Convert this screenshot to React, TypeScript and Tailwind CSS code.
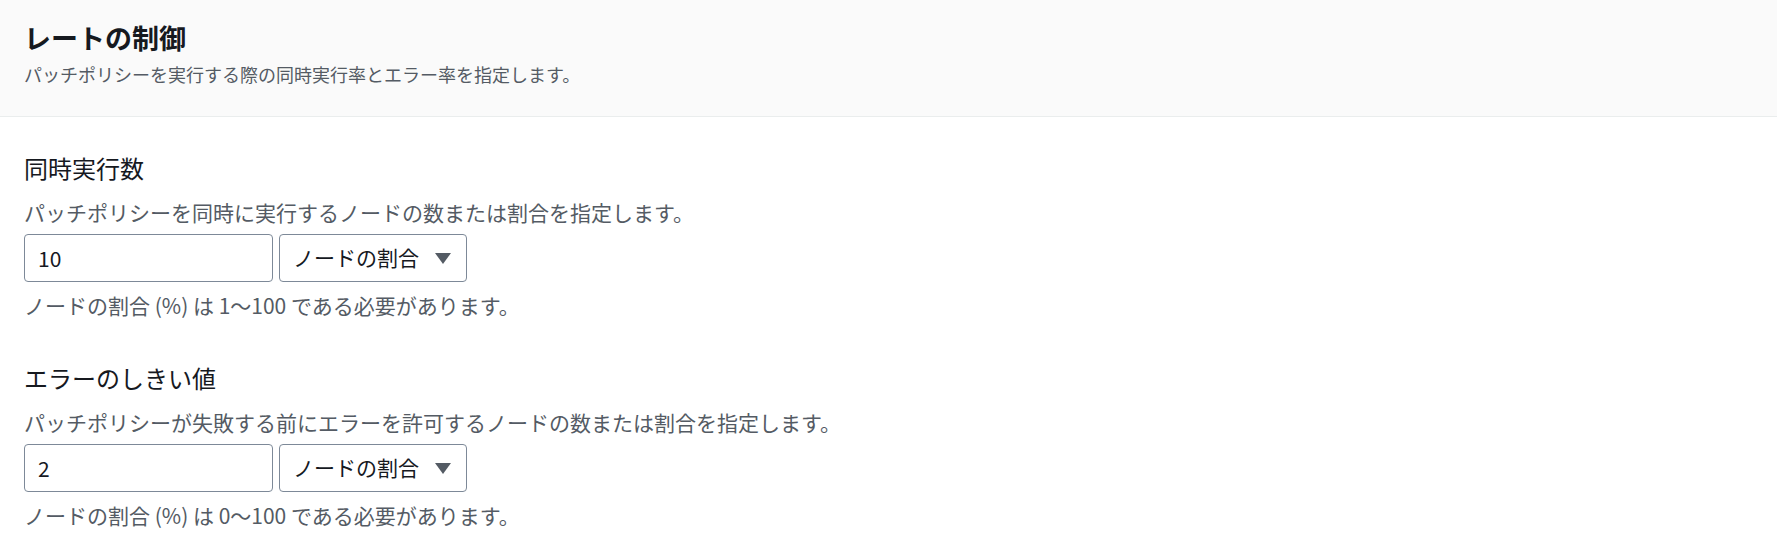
import React from 'react';

interface RateFieldProps {
  label: string;
  description: string;
  value: string;
  hint: string;
}

const RateField = ({ label, description, value, hint }: RateFieldProps) => {
  return (
    <section>
      <h2 className="text-[24px] leading-[32px] text-[#16191f]">{label}</h2>
      <p className="mt-[14px] text-[21px] leading-[28px] text-[#545b64]">{description}</p>
      <div className="mt-2 flex items-center gap-[6px]">
        <input
          type="text"
          defaultValue={value}
          className="h-[48px] w-[249px] rounded-[4px] border border-[#7d8998] bg-white px-[13px] text-[21px] text-[#16191f] focus:outline-none"
        />
        <button className="flex h-[48px] w-[188px] items-center justify-between rounded-[4px] border border-[#7d8998] bg-white pl-[13px] pr-[15px] text-[21px] text-[#16191f]">
          <span>ノードの割合</span>
          <svg width="16" height="11" viewBox="0 0 16 11" aria-hidden="true">
            <polygon points="0,0 16,0 8,11" fill="#545b64" />
          </svg>
        </button>
      </div>
      <p className="mt-[9px] text-[21px] leading-[28px] text-[#545b64]">{hint}</p>
    </section>
  );
};

const App = () => {
  return (
    <div className="min-h-[554px] w-full bg-white font-['Noto_Sans_CJK_JP','Noto_Sans',sans-serif]">
      <header className="h-[117px] border-b border-[#eaeded] bg-[#fafafa] px-6 pt-[21px]">
        <h1 className="text-[27px] font-bold leading-[34px] text-[#16191f]">レートの制御</h1>
        <p className="mt-[7px] text-[18px] leading-[24px] text-[#545b64]">
          パッチポリシーを実行する際の同時実行率とエラー率を指定します。
        </p>
      </header>
      <div className="flex flex-col gap-[43px] px-6 pt-[35px]">
        <RateField
          label="同時実行数"
          description="パッチポリシーを同時に実行するノードの数または割合を指定します。"
          value="10"
          hint="ノードの割合 (%) は 1〜100 である必要があります。"
        />
        <RateField
          label="エラーのしきい値"
          description="パッチポリシーが失敗する前にエラーを許可するノードの数または割合を指定します。"
          value="2"
          hint="ノードの割合 (%) は 0〜100 である必要があります。"
        />
      </div>
    </div>
  );
};

export default App;
